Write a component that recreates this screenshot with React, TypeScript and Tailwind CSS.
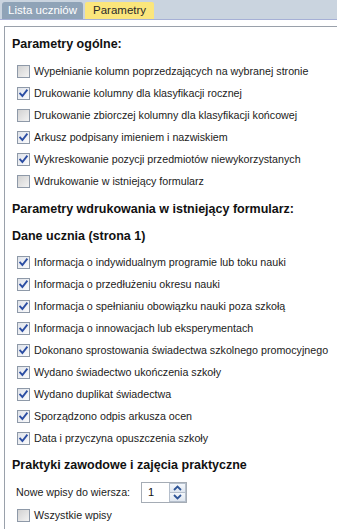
import React from "react";

function Check({ checked }: { checked: boolean }) {
  return (
    <span
      className={
        "relative inline-flex h-[13px] w-[13px] shrink-0 items-center justify-center border border-[#8e99a8] " +
        (checked
          ? "bg-gradient-to-br from-[#dfe3ea] to-[#fbfbfc]"
          : "bg-gradient-to-br from-[#d2d2d2] to-[#f3f3f3]")
      }
    >
      {checked && (
        <svg width="11" height="11" viewBox="0 0 11 11" className="absolute">
          <path d="M2.2 5.6 L4.4 8 L8.8 2.4" fill="none" stroke="#2c4ea3" strokeWidth="1.9" strokeLinecap="square" />
        </svg>
      )}
    </span>
  );
}

function Row({ label, checked }: { label: string; checked: boolean }) {
  return (
    <div className="flex h-[22px] items-center pl-[12px]">
      <Check checked={checked} />
      <span className="ml-[4px] text-[10.7px] text-[#1b1b1b] whitespace-nowrap">{label}</span>
    </div>
  );
}

function Heading({ children, className = "" }: { children: React.ReactNode; className?: string }) {
  return (
    <div className={"flex h-[26px] items-center pl-[7px] text-[12.5px] font-bold text-[#111] whitespace-nowrap " + className}>
      {children}
    </div>
  );
}

export default function App() {
  const general: [string, boolean][] = [
    ["Wypełnianie kolumn poprzedzających na wybranej stronie", false],
    ["Drukowanie kolumny dla klasyfikacji rocznej", true],
    ["Drukowanie zbiorczej kolumny dla klasyfikacji końcowej", false],
    ["Arkusz podpisany imieniem i nazwiskiem", true],
    ["Wykreskowanie pozycji przedmiotów niewykorzystanych", true],
    ["Wdrukowanie w istniejący formularz", false],
  ];
  const student: [string, boolean][] = [
    ["Informacja o indywidualnym programie lub toku nauki", true],
    ["Informacja o przedłużeniu okresu nauki", true],
    ["Informacja o spełnianiu obowiązku nauki poza szkołą", true],
    ["Informacja o innowacjach lub eksperymentach", true],
    ["Dokonano sprostowania świadectwa szkolnego promocyjnego", true],
    ["Wydano świadectwo ukończenia szkoły", true],
    ["Wydano duplikat świadectwa", true],
    ["Sporządzono odpis arkusza ocen", true],
    ["Data i przyczyna opuszczenia szkoły", true],
  ];
  return (
    <div className="h-[529px] w-[337px] overflow-hidden bg-white font-['Liberation_Sans',Arial,sans-serif]">
      <div className="flex h-[19px] items-end gap-[2px] bg-[#cad4df] pl-[2px]">
        <div className="flex h-[17px] items-center rounded-t-[3px] bg-[#8fa3b7] px-[6px] text-[11.5px] text-white">
          Lista uczniów
        </div>
        <div className="flex h-[17px] items-center rounded-t-[2px] bg-[#fbe67c] px-[8px] text-[11.5px] text-[#2a2a2a]">
          Parametry
        </div>
      </div>
      <div className="h-[1px] bg-[#a6b0d6]" />
      <div className="h-[6px] bg-white" />
      <div className="ml-[4px] h-[503px] border-l border-t border-[#9aa1ab] pt-[4px]">
        <Heading>Parametry ogólne:</Heading>
        <div className="mt-[3px]">
          {general.map(([l, c]) => (
            <Row key={l} label={l} checked={c} />
          ))}
        </div>
        <Heading className="mt-[4px]">Parametry wdrukowania w istniejący formularz:</Heading>
        <Heading className="mt-[1px]">Dane ucznia (strona 1)</Heading>
        <div className="mt-[2px]">
          {student.map(([l, c]) => (
            <Row key={l} label={l} checked={c} />
          ))}
        </div>
        <Heading className="mt-[3px]">Praktyki zawodowe i zajęcia praktyczne</Heading>
        <div className="mt-[2px] flex h-[24px] items-center pl-[11px]">
          <span className="w-[125px] text-[10.7px] text-[#1b1b1b]">Nowe wpisy do wiersza:</span>
          <div className="flex h-[21px] w-[46px] border border-[#a5acb5] bg-white">
            <span className="flex-1 pl-[6px] text-[11px] leading-[19px] text-[#111]">1</span>
            <div className="flex w-[17px] flex-col">
              <div className="flex flex-1 items-center justify-center border border-[#b5bfcc] bg-gradient-to-b from-[#f4f7fb] to-[#dfe6ef]">
                <svg width="9" height="6" viewBox="0 0 9 6">
                  <path d="M1 5 L4.5 1.5 L8 5" fill="none" stroke="#2f5597" strokeWidth="1.8" />
                </svg>
              </div>
              <div className="flex flex-1 items-center justify-center border border-t-0 border-[#b5bfcc] bg-gradient-to-b from-[#f4f7fb] to-[#dfe6ef]">
                <svg width="9" height="6" viewBox="0 0 9 6">
                  <path d="M1 1 L4.5 4.5 L8 1" fill="none" stroke="#2f5597" strokeWidth="1.8" />
                </svg>
              </div>
            </div>
          </div>
        </div>
        <Row label="Wszystkie wpisy" checked={false} />
      </div>
    </div>
  );
}
